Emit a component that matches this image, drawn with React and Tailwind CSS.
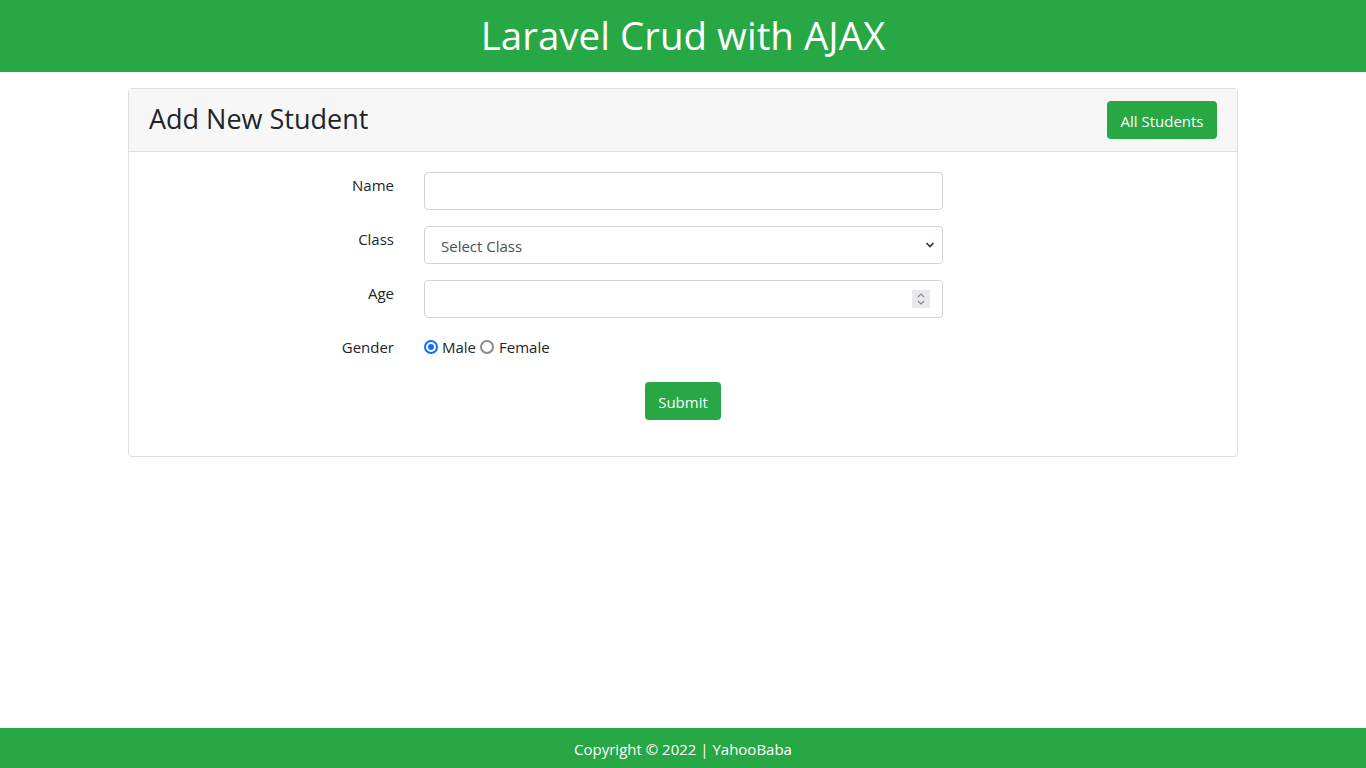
export default function App() {
  const font = { fontFamily: '"Open Sans", "Noto Sans", sans-serif' }

  return (
    <div className="min-h-screen flex flex-col bg-white text-[#212529]" style={font}>
      {/* Header */}
      <header className="h-[72px] bg-[#28a745] flex items-center justify-center pb-[3px]">
        <h1 className="text-[38.5px] leading-[48px] text-white font-normal">Laravel Crud with AJAX</h1>
      </header>

      {/* Main */}
      <main className="flex-1">
        <div className="w-[1110px] mx-auto mt-4 border border-[#dfdfdf] rounded-[4px]">
          <div className="h-[63px] px-5 bg-[#f7f7f7] border-b border-[#dfdfdf] flex items-center justify-between">
            <h3 className="text-[27px] leading-[34px] font-normal pb-[3px]">Add New Student</h3>
            <button className="h-[38px] w-[110px] bg-[#28a745] text-white text-[15px] rounded-[4px] pt-[2px]">All Students</button>
          </div>

          <form className="px-5 pt-5 pb-5 text-[15px]">
            <div className="flex items-start gap-[30px] mb-4">
              <label className="w-[245px] text-right leading-[26px]">Name</label>
              <input type="text" className="w-[519px] h-[38px] border border-[#ced4da] rounded-[4px] px-3 outline-none" />
            </div>

            <div className="flex items-start gap-[30px] mb-4">
              <label className="w-[245px] text-right leading-[26px]">Class</label>
              <div className="relative w-[519px]">
                <select className="w-full h-[38px] border border-[#ced4da] rounded-[4px] pl-4 pr-8 pt-[2px] appearance-none bg-white text-[#495057] outline-none">
                  <option>Select Class</option>
                </select>
                <svg className="absolute right-[8px] top-[15px] w-[10px] h-[8px]" viewBox="0 0 10 8" fill="none" stroke="#333" strokeWidth="1.6">
                  <path d="M1.5 2l3.5 3.5L8.5 2" />
                </svg>
              </div>
            </div>

            <div className="flex items-start gap-[30px] mb-4">
              <label className="w-[245px] text-right leading-[26px]">Age</label>
              <div className="w-[519px] h-[38px] border border-[#ced4da] rounded-[4px] flex items-center pl-3 pr-[12px]">
                <input type="text" className="flex-1 h-full outline-none" />
                <div className="w-[18px] h-[18px] bg-[#e9e9ed] flex flex-col items-center justify-center gap-[2px]">
                  <svg className="w-[8px] h-[5px]" viewBox="0 0 8 5" fill="none" stroke="#8a8a8a" strokeWidth="1.2">
                    <path d="M1 4l3-3 3 3" />
                  </svg>
                  <svg className="w-[8px] h-[5px]" viewBox="0 0 8 5" fill="none" stroke="#8a8a8a" strokeWidth="1.2">
                    <path d="M1 1l3 3 3-3" />
                  </svg>
                </div>
              </div>
            </div>

            <div className="flex items-center gap-[30px] h-[26px] mb-[22px]">
              <label className="w-[245px] text-right">Gender</label>
              <div className="flex items-center">
                <span className="w-[14px] h-[14px] rounded-full border-2 border-[#0d6efd] flex items-center justify-center">
                  <span className="w-[6px] h-[6px] rounded-full bg-[#0d6efd]" />
                </span>
                <span className="ml-[4px]">Male</span>
                <span className="w-[14px] h-[14px] rounded-full border-2 border-[#8a8a8f] ml-[4px]" />
                <span className="ml-[5px]">Female</span>
              </div>
            </div>

            <div className="flex justify-center mb-4">
              <button type="button" className="h-[38px] w-[76px] bg-[#28a745] text-white rounded-[4px] pt-[2px]">Submit</button>
            </div>
          </form>
        </div>
      </main>

      {/* Footer */}
      <footer className="h-[40px] bg-[#28a745] flex items-center justify-center pt-[2px]">
        <p className="text-white text-[15px]">Copyright © 2022 | YahooBaba</p>
      </footer>
    </div>
  )
}
